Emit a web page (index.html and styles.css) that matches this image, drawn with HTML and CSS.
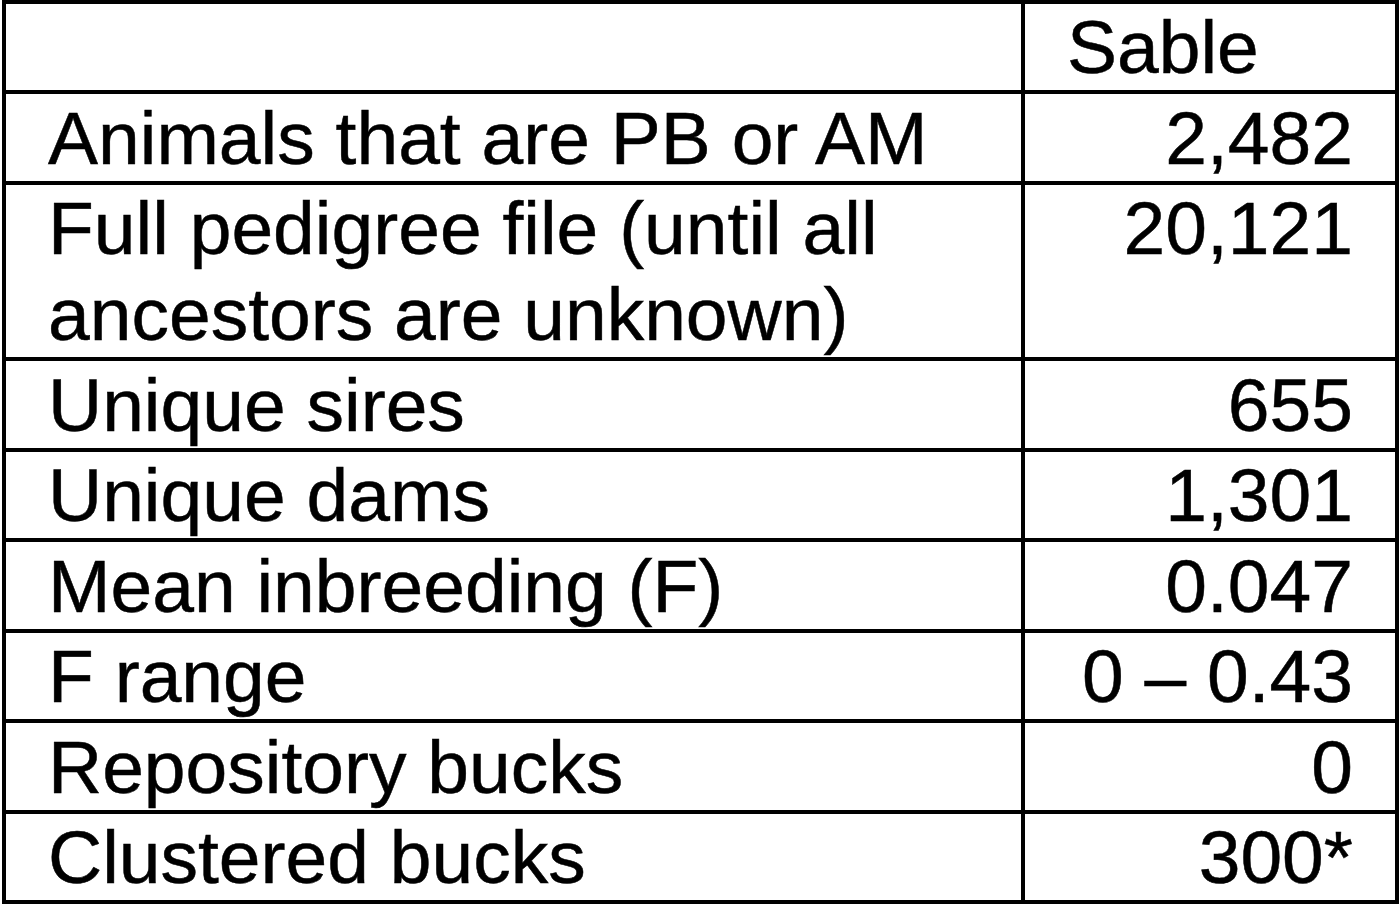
FILE: index.html
```html
<!DOCTYPE html>
<html>
<head>
<meta charset="utf-8">
<link rel="stylesheet" href="styles.css">
</head>
<body>
<table class="stats">
  <colgroup><col class="c1"><col class="c2"></colgroup>
  <tr><td></td><td class="head">Sable</td></tr>
  <tr><td>Animals that are PB or AM</td><td class="num">2,482</td></tr>
  <tr><td>Full pedigree file (until all ancestors are unknown)</td><td class="num">20,121</td></tr>
  <tr><td>Unique sires</td><td class="num">655</td></tr>
  <tr><td>Unique dams</td><td class="num">1,301</td></tr>
  <tr><td>Mean inbreeding (F)</td><td class="num">0.047</td></tr>
  <tr><td>F range</td><td class="num">0 – 0.43</td></tr>
  <tr><td>Repository bucks</td><td class="num">0</td></tr>
  <tr><td>Clustered bucks</td><td class="num">300*</td></tr>
</table>
</body>
</html>
```
FILE: styles.css
```css
html, body {
  margin: 0;
  padding: 0;
  background: #fff;
}
.stats {
  margin-left: 2px;
  width: 1397px;
  table-layout: fixed;
  border-collapse: separate;
  border-spacing: 0;
  border: 4px solid #000;
  font-family: "Liberation Sans", Arial, sans-serif;
  font-size: 75px;
  color: #000;
  -webkit-text-stroke: 0.5px #000;
}
.c1 { width: 1015px; }
.stats td {
  box-sizing: border-box;
  padding: 1px 42px 0 42px;
  line-height: 86px;
  vertical-align: top;
  white-space: normal;
}
.stats tr:nth-child(odd) td {
  padding-top: 0;
}
.stats td + td {
  border-left: 4px solid #000;
}
.stats tr + tr td {
  border-top: 4px solid #000;
}
.stats td.num {
  text-align: right;
}
.stats td.head {
  text-align: left;
}
```
